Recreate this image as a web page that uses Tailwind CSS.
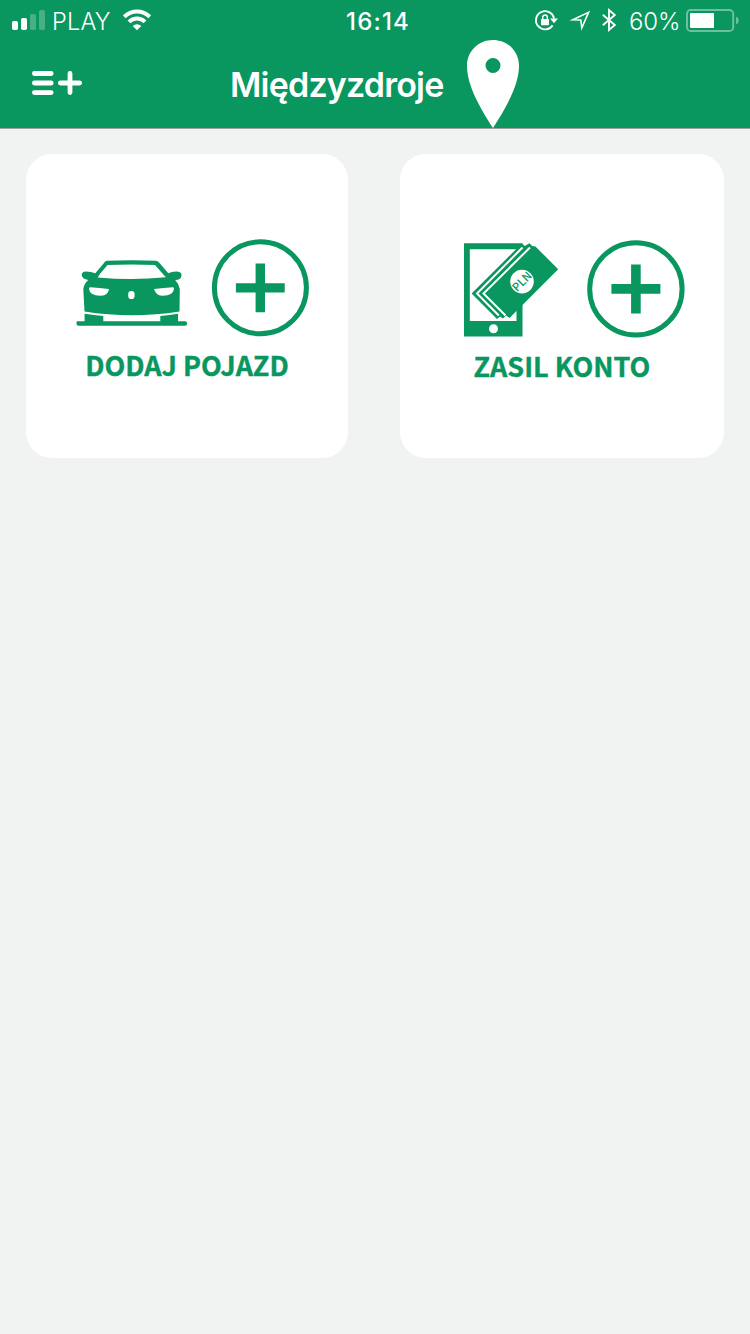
<!DOCTYPE html>
<html lang="pl">
<head>
<meta charset="utf-8">
<title>Międzyzdroje</title>
<script src="https://cdn.jsdelivr.net/npm/@tailwindcss/browser@4"></script>
</head>
<body class="w-[750px] h-[1334px] overflow-hidden bg-[#f0f3f2] font-['Inter','Noto_Sans',sans-serif]">
<header class="h-[129px] bg-[#09965f] border-b border-[#9ba39f] text-white">
  <div class="h-10 grid grid-cols-[346px_64px_1fr] items-center">
    <div class="flex items-center pl-3">
      <svg class="w-[33px] h-10" viewBox="12 0 33 40" fill="#fff"><rect x="12" y="21" width="6" height="9" rx="1.8"/><rect x="21" y="18" width="6" height="12" rx="1.8"/><g opacity=".25"><rect x="30" y="14" width="6" height="16" rx="1.8"/><rect x="39" y="10" width="6" height="20" rx="1.8"/></g></svg>
      <span class="ml-[7px] w-[71px] h-10 pt-[2px] text-[23.5px] leading-10 font-light tracking-[0.2px] whitespace-nowrap">PLAY</span>
      <svg class="w-7 h-10" viewBox="123 0 28 40"><g fill="none" stroke="#fff" stroke-width="4"><path d="M124.2 16.8a18.2 18.2 0 0 1 25.6 0"/><path d="M129 21.9a11.4 11.4 0 0 1 16 0"/></g><path d="M132.7 25.9a6.2 6.2 0 0 1 8.6 0L137 30.2Z" fill="#fff"/></svg>
    </div>
    <span class="h-10 pt-[2px] text-[24px] leading-10 font-medium tracking-[1.2px] whitespace-nowrap">16:14</span>
    <div class="flex items-center pl-[124px]">
      <svg class="w-[84px] h-10" viewBox="534 0 84 40" fill="none" stroke="#fff">
        <path d="M552.6 25.4A9.1 9.1 0 1 1 554 18.5" stroke-width="1.9"/>
        <path d="M550 18.6h8l-4 4.6z" fill="#fff" stroke="none"/>
        <rect x="541" y="19" width="8" height="6.2" rx=".8" fill="#fff" stroke="none"/><path d="M542.7 19v-1.4a2.3 2.6 0 0 1 4.6 0V19" stroke-width="1.4"/>
        <path d="M572.8 19.7 588.6 12.3 581.8 27.8 580.8 20Z" stroke-width="1.6" stroke-linejoin="miter" stroke-miterlimit="10"/>
        <path d="M602.8 14.8 614.8 25 609 30V10L614.8 15 602.8 25.3" stroke-width="1.9"/>
      </svg>
      <span class="ml-[11px] w-[57px] h-10 pt-[2px] text-[24px] leading-10 font-light tracking-[-0.1px] whitespace-nowrap">60%</span>
      <svg class="w-[53px] h-10" viewBox="686 0 53 40"><rect x="687" y="10" width="46.2" height="21" rx="3.8" fill="none" stroke="#fff" stroke-opacity=".4" stroke-width="2"/><rect x="690" y="13" width="24" height="15" rx="1" fill="#fff"/><path d="M736 16.5q2.8 1.2 2.8 4t-2.8 4z" fill="#fff" opacity=".4"/></svg>
    </div>
  </div>
  <nav class="h-[88px] flex items-center pl-8">
    <svg class="w-[50px] h-[88px]" viewBox="32 40 50 88" fill="none" stroke="#fff" stroke-width="4.8" stroke-linecap="round"><path d="M34.4 73.5H51.2M34.4 83H51.2M34.4 92.6H51.2M60.4 83H79.6M70 73.4V92.6"/></svg>
    <h1 class="ml-[148px] w-[237px] h-[88px] pt-px text-[34px] leading-[88px] font-semibold tracking-[-0.8px] whitespace-nowrap">Międzyzdroje</h1>
    <svg class="w-[52px] h-[88px]" viewBox="467 40 52 88"><path fill="#fff" fill-rule="evenodd" d="M493 40C478.500 40 467 51 467 66C467 85 480 108 493 128C506 108 519 85 519 66C519 51 507.500 40 493 40ZM493 58a7.500 7.500 0 1 1 0 15a7.500 7.500 0 1 1 0-15Z"/></svg>
  </nav>
</header>
<main class="flex gap-[52px] px-[26px] pt-[25px]">
  <button class="w-[322px] h-[304px] rounded-[26px] bg-white pt-[76px] flex flex-col items-center text-[#09965f]">
    <svg class="w-[322px] h-[110px] shrink-0" viewBox="26 230 322 110" fill="#09965f">
      <path d="M106.500 260.700Q131 259.800 156 260.700Q158 261 159.500 263L168.300 273.200Q172 271.300 177 271.500Q182 272 181.500 275.500Q181 280 175.200 280Q179 284 179.800 289L179.500 311.500Q132 319 84.500 311.500L83.300 289Q84 283.500 88.300 280Q82 279 81.700 275Q81.700 271.500 86 271.500Q91 271.500 95.300 273.200L104 263Q105 261 106.500 260.700Z"/>
      <path d="M76.800 321.300h7.800v-7.600q9 1.500 18.700 2.200v5.400h57v-5.400q9.500-.7 17.800-2.200v7.600h7q2 0 2 2.200t-2 2.200H78.500q-2 0-2-2.200t.3-2.200Z"/>
      <g fill="#fff"><path d="M107.500 265Q131 263.800 155 265L165.800 277.300Q132 280.700 97.800 277.500Q99.500 274 103.500 269.800Z"/><path d="M90 287.300Q99 288 109 289Q108 295.500 101 295.700Q90 296 89 289Q89 287.300 90 287.300Z"/><path d="M173 287.300Q164 288 154 289Q156 295.500 162 295.700Q173 296 174 289Q174 287.300 173 287.300Z"/><rect x="128.200" y="291" width="6.400" height="8" rx="3.100"/></g>
      <circle cx="260.400" cy="287.800" r="46" fill="none" stroke="#09965f" stroke-width="5"/>
      <path d="M255.600 263.500h9.400v19.700h19.700v9.400H265v19.700h-9.400v-19.700h-19.700v-9.400h19.700Z"/>
    </svg>
    <span class="text-[27px] leading-[50px] font-bold font-['Noto_Sans_CJK_SC',sans-serif] [-webkit-text-stroke:0.4px_#09965f] whitespace-nowrap">DODAJ POJAZD</span>
  </button>
  <button class="w-[324px] h-[304px] rounded-[26px] bg-white pt-[76px] flex flex-col items-center text-[#09965f]">
    <svg class="w-[324px] h-[111px] shrink-0" viewBox="400 230 324 111" fill="#09965f">
      <path fill-rule="evenodd" d="M464 243.300h58.500v93.300H464ZM469.800 249.200v71.800H516.500v-71.800ZM493.500 324.300a4.500 4.500 0 1 0 0 9a4.500 4.500 0 1 0 0-9Z"/>
      <path d="M471.600 293.500 519.800 245.500 521.800 243.200 524.800 246 529.500 243.200 532.200 246 535.500 246.500 558.200 269.200 509.500 318 506.200 315.500 503 318.500 500 316.500 497 319Z"/>
      <g fill="none" stroke="#fff" stroke-width="2"><path d="M522.500 247.500 477 293.500 498.800 315.500"/><path d="M530 247.500 483.500 293.500 505.500 315.500"/></g>
      <circle cx="522" cy="281.600" r="11.800" fill="#fff"/>
      <text transform="translate(522 281.600) rotate(-45)" x="0" y="3.900" text-anchor="middle" font-family="Noto Sans CJK SC, sans-serif" font-size="11.400" font-weight="500">PLN</text>
      <circle cx="635.900" cy="288.900" r="46.200" fill="none" stroke="#09965f" stroke-width="5"/>
      <path d="M631.100 264.400h9.600v19.700h19.700v9.600h-19.700v19.700h-9.600v-19.700h-19.700v-9.600h19.700Z"/>
    </svg>
    <span class="text-[27px] leading-[50px] font-bold font-['Noto_Sans_CJK_SC',sans-serif] [-webkit-text-stroke:0.4px_#09965f] whitespace-nowrap">ZASIL KONTO</span>
  </button>
</main>
</body>
</html>
